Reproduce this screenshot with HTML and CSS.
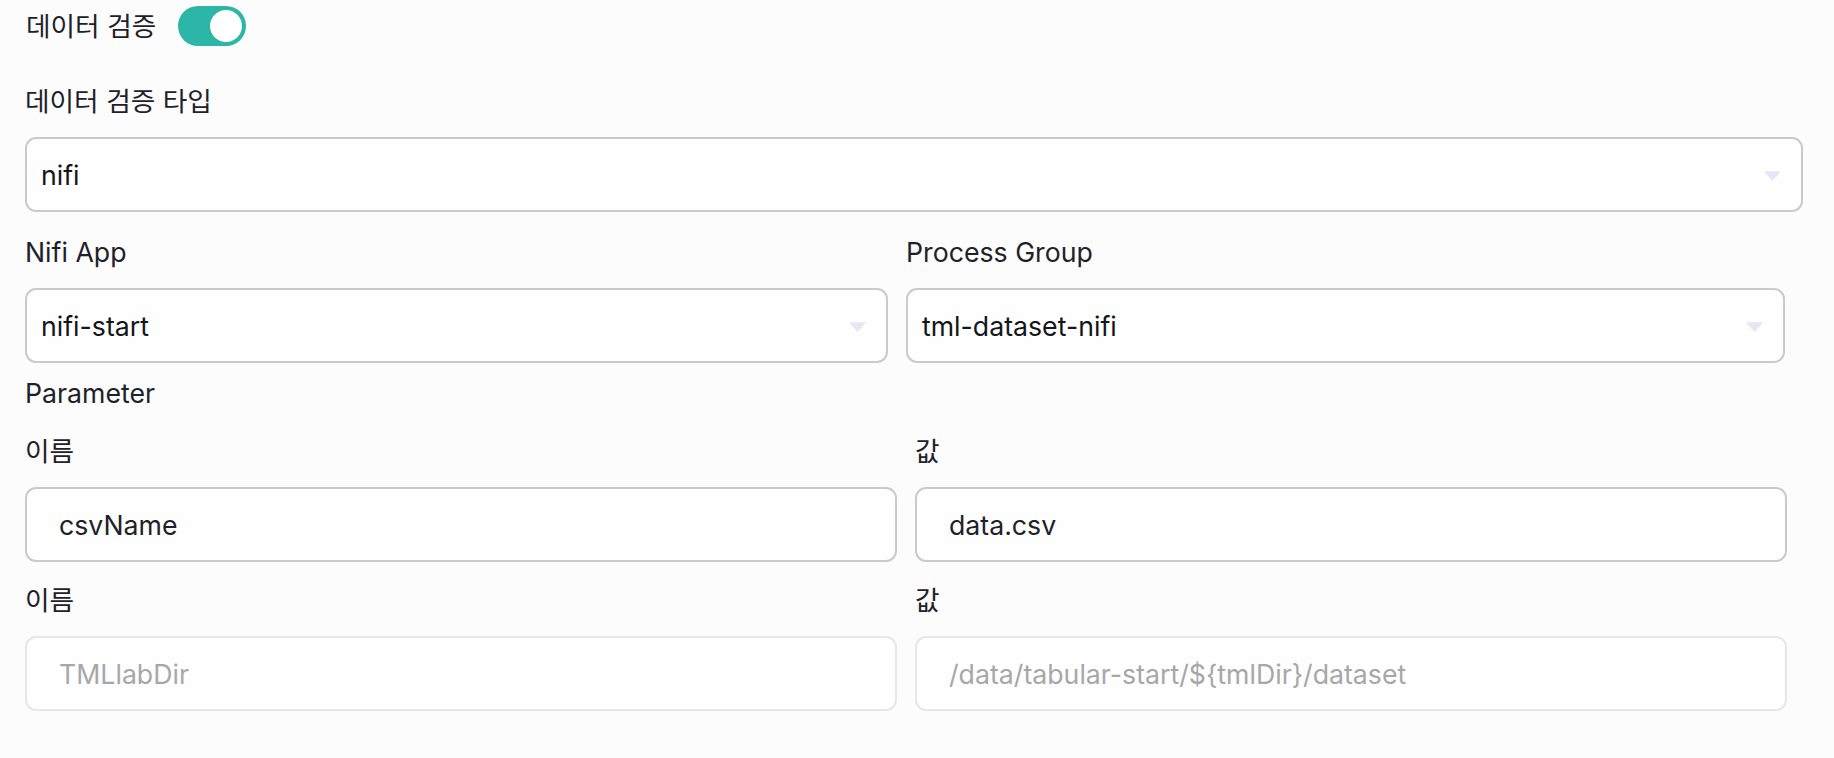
FILE: index.html
```html
<!DOCTYPE html>
<html lang="ko">
<head>
<meta charset="utf-8">
<title>데이터 검증</title>
<link rel="stylesheet" href="styles.css">
</head>
<body>
<div class="page">
  <div class="toggle-row">
    <span class="label">데이터 검증</span>
    <span class="switch"><span class="knob"></span></span>
  </div>

  <div class="label type-label">데이터 검증 타입</div>
  <div class="select full">
    <span class="value">nifi</span>
    <svg class="caret" width="17" height="10" viewBox="0 0 17 10"><path d="M1.5 1 H15.5 L8.5 9 Z" fill="#e6e6f4" stroke="#e6e6f4" stroke-width="1.5" stroke-linejoin="round"/></svg>
  </div>

  <div class="nifi-row">
    <div class="field">
      <div class="label">Nifi App</div>
      <div class="select">
        <span class="value">nifi-start</span>
        <svg class="caret" width="17" height="10" viewBox="0 0 17 10"><path d="M1.5 1 H15.5 L8.5 9 Z" fill="#e6e6f4" stroke="#e6e6f4" stroke-width="1.5" stroke-linejoin="round"/></svg>
      </div>
    </div>
    <div class="field">
      <div class="label">Process Group</div>
      <div class="select">
        <span class="value">tml-dataset-nifi</span>
        <svg class="caret" width="17" height="10" viewBox="0 0 17 10"><path d="M1.5 1 H15.5 L8.5 9 Z" fill="#e6e6f4" stroke="#e6e6f4" stroke-width="1.5" stroke-linejoin="round"/></svg>
      </div>
    </div>
  </div>

  <div class="label param-label">Parameter</div>

  <div class="param-row first">
    <div class="field">
      <div class="label">이름</div>
      <div class="input">csvName</div>
    </div>
    <div class="field">
      <div class="label">값</div>
      <div class="input">data.csv</div>
    </div>
  </div>

  <div class="param-row">
    <div class="field">
      <div class="label">이름</div>
      <div class="input disabled">TMLlabDir</div>
    </div>
    <div class="field">
      <div class="label">값</div>
      <div class="input disabled">/data/tabular-start/${tmlDir}/dataset</div>
    </div>
  </div>
</div>
</body>
</html>
```

FILE: styles.css
```css
* { box-sizing: border-box; }

html, body {
  margin: 0;
  padding: 0;
  background: #fcfcfd;
}

body {
  font-family: Inter, "Noto Sans CJK KR", sans-serif;
  font-size: 26.7px;
  color: #1e2228;
}

.page {
  padding: 6px 31px 40px 25px;
  width: 1834px;
}

.label {
  line-height: 36px;
  height: 36px;
  color: #1e2228;
}

.toggle-row {
  display: flex;
  align-items: center;
  gap: 22px;
  height: 40px;
}

.toggle-row .label {
  padding-left: 1px;
}

.switch {
  width: 68px;
  height: 40px;
  border-radius: 20px;
  background: #2bb6a8;
  display: flex;
  align-items: center;
  justify-content: flex-end;
  padding-right: 4px;
}

.knob {
  width: 32px;
  height: 32px;
  border-radius: 50%;
  background: #ffffff;
}

.type-label {
  margin-top: 37px;
  margin-bottom: 18px;
}

.select,
.input {
  height: 75px;
  border: 2px solid #cacacd;
  border-radius: 11px;
  background: #fefefe;
  display: flex;
  align-items: center;
  color: #141619;
}

.select {
  justify-content: space-between;
  padding: 0 20px 0 14px;
}

.select .caret {
  flex: none;
  margin-top: 3px;
}

.select.full {
  width: 1778px;
}

.nifi-row {
  display: grid;
  grid-template-columns: 863px 879px;
  column-gap: 18px;
  margin-top: 22px;
}

.field .label {
  margin-bottom: 18px;
}

.param-label {
  margin-top: 12px;
}

.param-row {
  display: grid;
  grid-template-columns: 872px 872px;
  column-gap: 18px;
  margin-top: 20px;
}

.param-row.first {
  margin-top: 22px;
}

.input {
  padding: 0 20px 0 32px;
  color: #1e2228;
}

.input.disabled {
  border-color: #e7e7e9;
  color: #a7a7aa;
}
```
